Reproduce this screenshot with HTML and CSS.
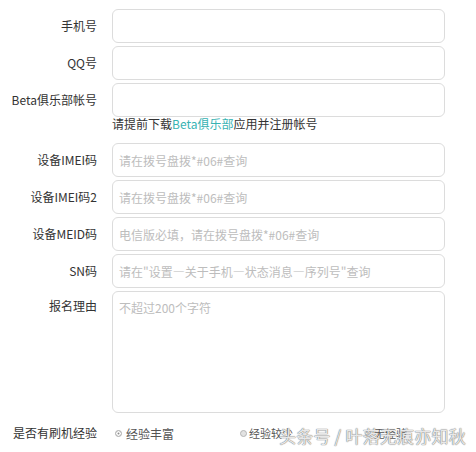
FILE: index.html
```html
<!DOCTYPE html>
<html lang="zh">
<head>
<meta charset="utf-8">
<title>Beta报名</title>
<link rel="stylesheet" href="styles.css">
</head>
<body>
<form class="form">
  <div class="row">
    <label class="lbl">手机号</label>
    <input class="field" type="text">
  </div>
  <div class="row">
    <label class="lbl">QQ号</label>
    <input class="field" type="text">
  </div>
  <div class="row">
    <label class="lbl">Beta俱乐部帐号</label>
    <input class="field" type="text">
  </div>
  <div class="help">请提前下载<a class="link">Beta俱乐部</a>应用并注册帐号</div>
  <div class="row">
    <label class="lbl">设备IMEI码</label>
    <input class="field" type="text" placeholder="请在拨号盘拨*#06#查询">
  </div>
  <div class="row">
    <label class="lbl">设备IMEI码2</label>
    <input class="field" type="text" placeholder="请在拨号盘拨*#06#查询">
  </div>
  <div class="row">
    <label class="lbl">设备MEID码</label>
    <input class="field" type="text" placeholder="电信版必填，请在拨号盘拨*#06#查询">
  </div>
  <div class="row">
    <label class="lbl">SN码</label>
    <input class="field" type="text" placeholder="请在&quot;设置—关于手机—状态消息—序列号&quot;查询">
  </div>
  <div class="row row-area">
    <label class="lbl lbl-top">报名理由</label>
    <textarea class="area" placeholder="不超过200个字符"></textarea>
  </div>
  <div class="row">
    <label class="lbl">是否有刷机经验</label>
    <div class="radios">
      <span class="opt"><span class="dot on"></span>经验丰富</span>
      <span class="opt small"><span class="dot"></span>经验较少</span>
      <span class="opt small"><span class="dot"></span>无经验</span>
    </div>
  </div>
</form>
<div class="mark">头条号 / 叶落无痕亦知秋</div>
</body>
</html>
```

FILE: styles.css
```css
html, body {
  margin: 0;
  padding: 0;
  background: #fff;
}
body {
  width: 476px;
  height: 452px;
  overflow: hidden;
  position: relative;
  font-family: "Noto Sans CJK SC", "Noto Sans", sans-serif;
  font-size: 12px;
  color: #333;
}
.form {
  display: flex;
  flex-direction: column;
  padding-top: 9px;
}
.row {
  display: grid;
  grid-template-columns: 97px 333px;
  column-gap: 15px;
  height: 34px;
  margin-bottom: 3px;
}
.lbl {
  text-align: right;
  line-height: 34px;
  white-space: nowrap;
  color: #333;
}
.field {
  box-sizing: border-box;
  width: 333px;
  height: 34px;
  margin: 0;
  border: 1px solid #dcdcdc;
  border-radius: 6px;
  padding: 0 6px;
  font-family: inherit;
  font-size: 12px;
  color: #333;
  background: #fff;
  outline: none;
}
.field::placeholder,
.area::placeholder {
  color: #bdbdbd;
}
.help {
  margin: -3px 0 12px 112px;
  line-height: 14px;
  height: 14px;
  white-space: nowrap;
  color: #333;
}
.link {
  color: #37b3b3;
}
.row-area {
  height: 122px;
}
.lbl-top {
  line-height: 30px;
}
.area {
  box-sizing: border-box;
  width: 333px;
  height: 122px;
  margin: 0;
  border: 1px solid #dcdcdc;
  border-radius: 6px;
  padding: 7px 6px;
  font-family: inherit;
  font-size: 12px;
  line-height: 18px;
  resize: none;
  outline: none;
}
.radios {
  display: grid;
  grid-template-columns: 125px 125px 83px;
  align-items: center;
  padding-left: 3px;
}
.opt {
  display: flex;
  align-items: center;
  gap: 4px;
  color: #555;
  font-size: 12px;
  white-space: nowrap;
}
.opt.small {
  font-size: 11px;
  gap: 2px;
}
.dot {
  box-sizing: border-box;
  width: 7px;
  height: 7px;
  border-radius: 50%;
  border: 1px solid #b5b5b5;
  background: #e2e2e2;
  display: inline-block;
}
.dot.on {
  background: #fff;
  border-color: #aaa;
  box-shadow: inset 0 0 0 1.5px #fff, inset 0 0 0 4px #8a8a8a;
}
.mark {
  position: absolute;
  left: 279px;
  top: 425px;
  font-size: 17px;
  line-height: 22px;
  white-space: nowrap;
  color: rgba(255, 255, 255, 0.85);
  text-shadow: 0 0 1px #666, 0 0 1px #888;
  letter-spacing: 0.2px;
}
```
